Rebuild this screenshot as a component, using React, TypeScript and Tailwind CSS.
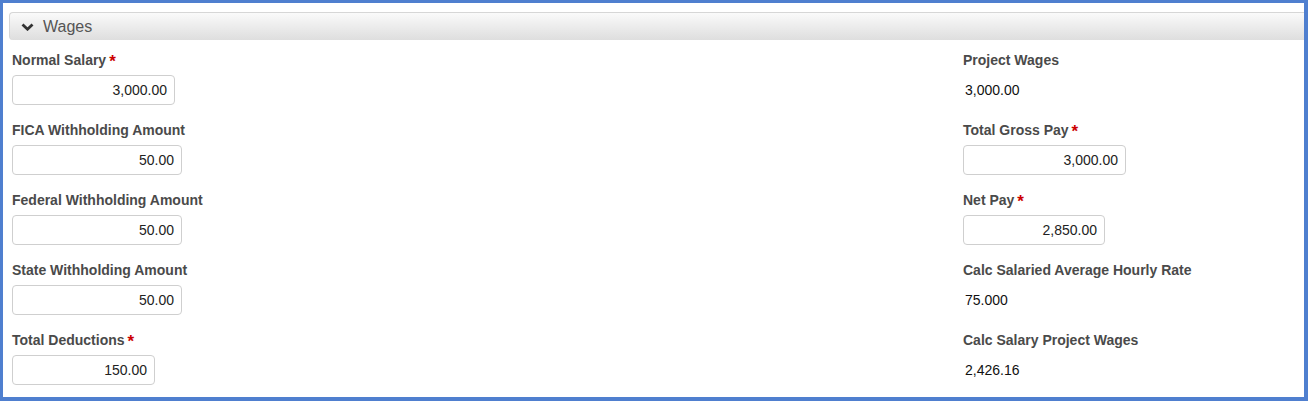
const left = [
  { label: "Normal Salary", value: "3,000.00", req: true, w: "w-[163px]" },
  { label: "FICA Withholding Amount", value: "50.00", w: "w-[170px]" },
  { label: "Federal Withholding Amount", value: "50.00", w: "w-[170px]" },
  { label: "State Withholding Amount", value: "50.00", w: "w-[170px]" },
  { label: "Total Deductions", value: "150.00", req: true, w: "w-[143px]" },
];

const right = [
  { label: "Project Wages", value: "3,000.00", readOnly: true },
  { label: "Total Gross Pay", value: "3,000.00", req: true, w: "w-[163px]" },
  { label: "Net Pay", value: "2,850.00", req: true, w: "w-[142px]" },
  { label: "Calc Salaried Average Hourly Rate", value: "75.000", readOnly: true },
  { label: "Calc Salary Project Wages", value: "2,426.16", readOnly: true },
];

function Field(props: any) {
  const { label, value, req, w, readOnly } = props;
  return (
    <div className="flex flex-col h-[70px]">
      <div className="flex items-start h-[16px] leading-[16px] text-[14px] font-bold text-[#4a4a4a]">
        {label}
        {req && (
          <span className="ml-[3px] text-[17px] leading-[16px] text-[#cc0000] relative top-[2px]">*</span>
        )}
      </div>
      {readOnly ? (
        <div className="mt-[7px] h-[30px] flex items-center pl-[2px] text-[14px] text-[#111]">{value}</div>
      ) : (
        <div
          className={`mt-[7px] h-[30px] ${w} flex items-center justify-end pr-[7px] border border-[#cfcfcf] rounded-[4px] bg-white text-[14px] text-[#222]`}
        >
          {value}
        </div>
      )}
    </div>
  );
}

export default function App() {
  return (
    <div
      className="h-[401px] w-[1308px] bg-white border-l-[3px] border-t-[3px] border-r-4 border-b-4 border-[#4f7fcf] overflow-hidden"
      style={{ fontFamily: '"Liberation Sans", Arial, sans-serif' }}
    >
      <div className="pl-[6px] pt-[9px]">
        <div className="h-[28px] flex items-center gap-[9px] pl-[11px] border-t border-l border-[#d6d6d6] rounded-tl-[4px] rounded-bl-[4px] bg-gradient-to-b from-[#fafafa] to-[#dedede]">
          <svg width="13" height="8" viewBox="0 0 13 8" className="mt-[1px]">
            <path d="M1.5 1.5 L6.5 6.2 L11.5 1.5" fill="none" stroke="#333" strokeWidth="2.8" />
          </svg>
          <span className="text-[16px] text-[#555]">Wages</span>
        </div>
      </div>
      <div className="flex pl-[9px] pt-[12px]">
        <div className="w-[951px] flex flex-col">
          {left.map((f) => (
            <Field key={f.label} {...f} />
          ))}
        </div>
        <div className="flex flex-col">
          {right.map((f) => (
            <Field key={f.label} {...f} />
          ))}
        </div>
      </div>
    </div>
  );
}
